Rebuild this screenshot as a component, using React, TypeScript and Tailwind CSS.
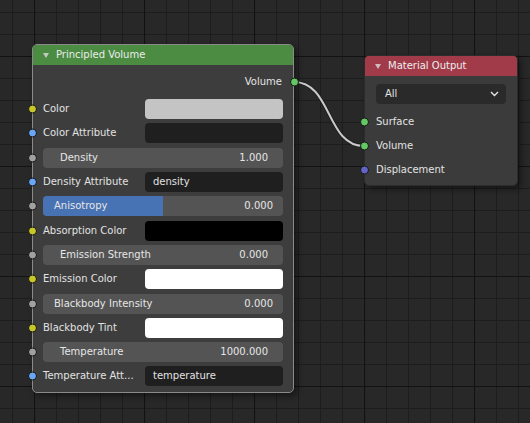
import React from 'react';

type Row =
  | { kind: 'label'; label: string; socket: string; field?: 'color' | 'text'; swatch?: string; text?: string }
  | { kind: 'number'; label: string; socket: string; value: string; factor?: number };

const YELLOW = 'bg-[#c7c729]';
const BLUE = 'bg-[#6aa6f3]';
const GREY = 'bg-[#a1a1a1]';

const ROWS: Row[] = [
  { kind: 'label', label: 'Color', socket: YELLOW, field: 'color', swatch: 'bg-[#c4c4c4]' },
  { kind: 'label', label: 'Color Attribute', socket: BLUE, field: 'text', text: '' },
  { kind: 'number', label: 'Density', socket: GREY, value: '1.000' },
  { kind: 'label', label: 'Density Attribute', socket: BLUE, field: 'text', text: 'density' },
  { kind: 'number', label: 'Anisotropy', socket: GREY, value: '0.000', factor: 0.5 },
  { kind: 'label', label: 'Absorption Color', socket: YELLOW, field: 'color', swatch: 'bg-black' },
  { kind: 'number', label: 'Emission Strength', socket: GREY, value: '0.000' },
  { kind: 'label', label: 'Emission Color', socket: YELLOW, field: 'color', swatch: 'bg-white' },
  { kind: 'number', label: 'Blackbody Intensity', socket: GREY, value: '0.000', factor: 0 },
  { kind: 'label', label: 'Blackbody Tint', socket: YELLOW, field: 'color', swatch: 'bg-white' },
  { kind: 'number', label: 'Temperature', socket: GREY, value: '1000.000' },
  { kind: 'label', label: 'Temperature Att...', socket: BLUE, field: 'text', text: 'temperature' },
];

// sockets sit on the node's border line
function Socket({ color, side }: { color: string; side: 'left' | 'right' }) {
  return (
    <span
      className={`absolute top-1/2 -translate-y-1/2 w-[9px] h-[9px] rounded-full border border-[#161616] ${color} ${
        side === 'left' ? 'left-[-5.5px]' : 'right-[-5.5px]'
      }`}
    />
  );
}

function Caret() {
  return (
    <svg width="8" height="8" viewBox="0 0 8 8" className="shrink-0">
      <path d="M1 2 L7 2 L4 7 Z" fill="#dcdcdc" fillOpacity="0.8" />
    </svg>
  );
}

function NodeRow({ row }: { row: Row }) {
  if (row.kind === 'number') {
    const isFactor = row.factor !== undefined;
    return (
      <div className="relative h-[24.3px] flex items-center px-[10px]">
        <Socket color={row.socket} side="left" />
        <div className="relative w-full h-[20px] rounded-[4px] bg-[#545454] overflow-hidden flex items-center">
          {isFactor && row.factor! > 0 && (
            <div className="absolute left-0 top-0 bottom-0 bg-[#4772b3]" style={{ width: `${row.factor! * 100}%` }} />
          )}
          <span className={`relative ${isFactor ? 'pl-[11px]' : 'pl-[17px]'} text-[#e6e6e6]`}>{row.label}</span>
          <span className={`relative ml-auto ${isFactor ? 'pr-[10px]' : 'pr-[15px]'} text-[#e6e6e6]`}>{row.value}</span>
        </div>
      </div>
    );
  }
  return (
    <div className="relative h-[24.3px] flex items-center px-[10px]">
      <Socket color={row.socket} side="left" />
      <span className="flex-1 text-[#e2e2e2] whitespace-nowrap">{row.label}</span>
      {row.field === 'color' ? (
        <div className={`w-[138px] h-[20px] rounded-[4px] ${row.swatch}`} />
      ) : (
        <div className="w-[138px] h-[20px] rounded-[4px] bg-[#1f1f1f] flex items-center pl-[8px] text-[#e2e2e2]">
          {row.text}
        </div>
      )}
    </div>
  );
}

function Grid() {
  return (
    <svg className="absolute inset-0" width="530" height="423">
      <defs>
        <pattern id="minor" x="12" y="12" width="22" height="22" patternUnits="userSpaceOnUse">
          <path d="M0 0.5 H22 M0.5 0 V22" stroke="#1d1d1d" strokeWidth="1" fill="none" />
        </pattern>
        <pattern id="major" x="34" y="56" width="110" height="110" patternUnits="userSpaceOnUse">
          <path d="M0 0.5 H110 M0.5 0 V110" stroke="#121212" strokeWidth="1.2" fill="none" />
        </pattern>
      </defs>
      <rect width="530" height="423" fill="#282828" />
      <rect width="530" height="423" fill="url(#minor)" />
      <rect width="530" height="423" fill="url(#major)" />
    </svg>
  );
}

function Link() {
  const d = 'M294 82 C 332 82, 326 146, 364 146';
  return (
    <svg className="absolute inset-0 pointer-events-none" width="530" height="423">
      <path d={d} stroke="#1a1a1a" strokeWidth="3.5" fill="none" />
      <path d={d} stroke="#c9c9c9" strokeWidth="2" fill="none" />
    </svg>
  );
}

export default function App() {
  return (
    <div
      className="relative w-[530px] h-[423px] overflow-hidden bg-[#282828] text-[10px] leading-none"
      style={{ fontFamily: "'DejaVu Sans', 'Liberation Sans', sans-serif" }}
    >
      <Grid />
      <Link />

      {/* Principled Volume */}
      <div className="absolute left-[32px] top-[44px] w-[262px] rounded-[5px] border border-[#8a8a8a] bg-[#3d3d3d] shadow-[3px_3px_6px_rgba(0,0,0,0.45)]">
        <div className="h-[20px] rounded-t-[4px] bg-[#4b8b42] flex items-center gap-[6px] pl-[9px] text-[#ececec]">
          <Caret />
          <span>Principled Volume</span>
        </div>
        <div className="pt-[5px] pb-[3px]">
          <div className="relative h-[24px] flex items-center justify-end pr-[11px] text-[#e2e2e2]">
            <span>Volume</span>
            <Socket color="bg-[#63c763]" side="right" />
          </div>
          <div className="mt-[3px]">
            {ROWS.map((row) => (
              <NodeRow key={row.label} row={row} />
            ))}
          </div>
        </div>
      </div>

      {/* Material Output */}
      <div className="absolute left-[364px] top-[55px] w-[154px] h-[131px] rounded-[5px] border border-[#2c2c2c] bg-[#3b3b3b] shadow-[3px_3px_6px_rgba(0,0,0,0.45)]">
        <div className="h-[20px] rounded-t-[4px] bg-[#a13b49] flex items-center gap-[6px] pl-[9px] text-[#ececec]">
          <Caret />
          <span>Material Output</span>
        </div>
        <div className="px-[11px] pt-[8px]">
          <div className="h-[20px] rounded-[4px] bg-[#2a2a2a] flex items-center pl-[9px] pr-[7px] text-[#e2e2e2]">
            <span>All</span>
            <svg width="9" height="6" viewBox="0 0 9 6" className="ml-auto">
              <path d="M1 1 L4.5 4.5 L8 1" stroke="#e6e6e6" strokeWidth="1.4" fill="none" />
            </svg>
          </div>
        </div>
        <div className="mt-[6px]">
          {[
            { label: 'Surface', color: 'bg-[#63c763]' },
            { label: 'Volume', color: 'bg-[#63c763]' },
            { label: 'Displacement', color: 'bg-[#6363c7]' },
          ].map((s) => (
            <div key={s.label} className="relative h-[24px] flex items-center pl-[11px] text-[#e2e2e2]">
              <Socket color={s.color} side="left" />
              <span>{s.label}</span>
            </div>
          ))}
        </div>
      </div>
    </div>
  );
}
